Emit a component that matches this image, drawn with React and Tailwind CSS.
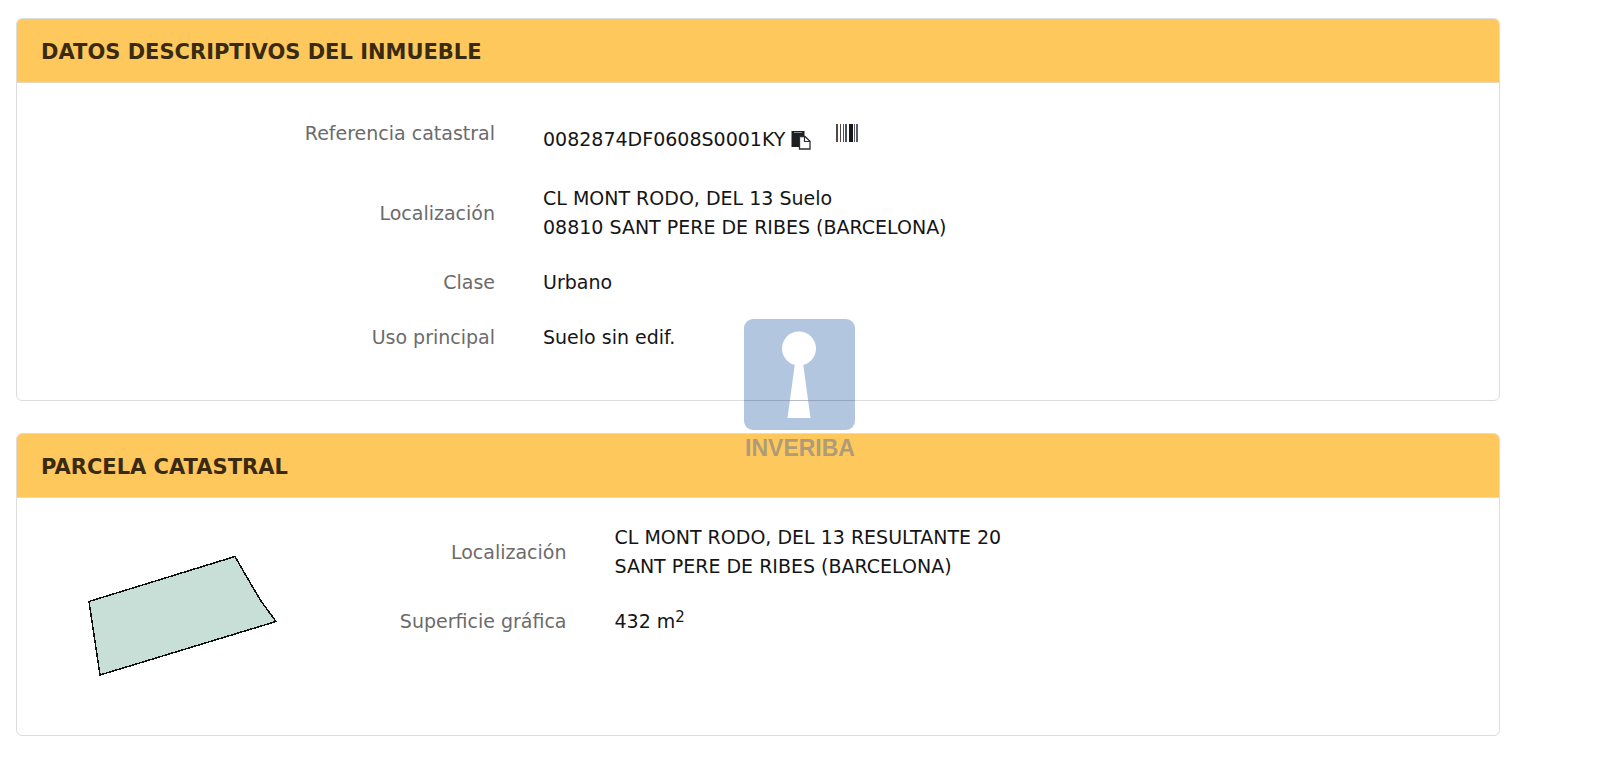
const Panel = ({ title, children }) => (
  <section className="rounded-md border border-[#dcdcdc] bg-white overflow-hidden">
    <h2 className="h-16 flex items-center px-6 pt-[3px] bg-[#fec85c] border-b border-[#e8d9b8] font-bold text-[21px] text-[#3a2a12]">
      {title}
    </h2>
    {children}
  </section>
);

const Row = ({ label, cols, children }) => (
  <div className={`grid ${cols} items-center py-[13px]`}>
    <dt className="pr-4 text-right text-[#6b6b6b]">{label}</dt>
    <dd className="pl-8">{children}</dd>
  </div>
);

const PasteIcon = () => (
  <svg width="20" height="20" viewBox="0 0 20 20">
    <path d="M0.500 1h13v5H8v11H0.500z" fill="#1d1f22" />
    <path d="M3 2.500h8" stroke="#8a8d90" strokeWidth="1" />
    <path d="M8.500 6.500h5.500l5 4.800v7.700H8.500z" fill="#fff" stroke="#2b2d31" strokeWidth="1.300" />
    <path d="M13.500 6.500v5h5.500" fill="none" stroke="#2b2d31" strokeWidth="1.200" />
  </svg>
);

const BarcodeIcon = () => (
  <svg width="22" height="18" viewBox="0 0 22 18">
    <path d="M0 0h2v18H0zM4 0h1v18H4z" fill="#4f4845" />
    <path d="M7 0h1v18H7zM9 0h2v18H9z" fill="#4c5160" />
    <path d="M13 0h4v18h-4z" fill="#16171c" />
    <path d="M18 0h1v18h-1zM20 0h2v18h-2z" fill="#5b5b68" />
  </svg>
);

const Watermark = () => (
  <div className="pointer-events-none absolute inset-x-0 top-[319px] flex flex-col items-center">
    <svg width="112" height="112" viewBox="0 0 112 112">
      <rect width="111" height="111" rx="9" fill="#afc4df" fillOpacity="0.96" />
      <circle cx="55" cy="29.500" r="17" fill="#fff" />
      <path d="M51 44h8l7.500 55h-23z" fill="#fff" />
      <path d="M0 81.500h111" stroke="#8390a8" strokeOpacity="0.6" />
    </svg>
    <p className="font-['Liberation_Sans',sans-serif] font-bold text-[23px] leading-[34px] text-[#7d8288]/65">INVERIBA</p>
  </div>
);

const App = () => {
  const wide = "grid-cols-[1fr_2fr]";
  const narrow = "grid-cols-[1fr_3fr]";

  return (
    <main className="relative pl-4 pr-[100px] py-[18px] flex flex-col gap-8 font-['DejaVu_Sans',sans-serif] text-[19px] leading-[29px] text-[#151515]">
      <Panel title="DATOS DESCRIPTIVOS DEL INMUEBLE">
        {/* property data */}
        <dl className="pt-6 pb-[35px]">
          <div className={`grid ${wide} items-start pt-3 pb-[17px]`}>
            <dt className="pr-4 text-right text-[#6b6b6b]">Referencia catastral</dt>
            <dd className="pl-8 flex items-start">
              <span className="pt-[6px]">0082874DF0608S0001KY</span>
              <button type="button" aria-label="Copiar" className="mt-[11px] ml-[6px]">
                <PasteIcon />
              </button>
              <button type="button" aria-label="Código de barras" className="mt-[5px] ml-[25px]">
                <BarcodeIcon />
              </button>
            </dd>
          </div>
          <Row label="Localización" cols={wide}>
            CL MONT RODO, DEL 13 Suelo
            <br />
            08810 SANT PERE DE RIBES (BARCELONA)
          </Row>
          <Row label="Clase" cols={wide}>Urbano</Row>
          <Row label="Uso principal" cols={wide}>Suelo sin edif.</Row>
        </dl>
      </Panel>

      <Panel title="PARCELA CATASTRAL">
        {/* plot outline + data */}
        <div className="flex pt-3 pb-14">
          <div className="w-[260px] shrink-0 pl-[70px] pt-[45px]">
            <svg width="190" height="124" viewBox="0 0 190 124" shapeRendering="crispEdges">
              <path
                d="M2 46.500L148 1.500L165 31L174 46L189 66.500L13 120z"
                fill="#c8dfd7"
                stroke="#111"
                strokeWidth="1.500"
              />
            </svg>
          </div>
          <dl className="flex-1">
            <Row label="Localización" cols={narrow}>
              CL MONT RODO, DEL 13 RESULTANTE 20
              <br />
              SANT PERE DE RIBES (BARCELONA)
            </Row>
            <Row label="Superficie gráfica" cols={narrow}>
              432 m<sup className="text-[15px] -top-[6px]">2</sup>
            </Row>
          </dl>
        </div>
      </Panel>

      <Watermark />
    </main>
  );
};

export default App;
